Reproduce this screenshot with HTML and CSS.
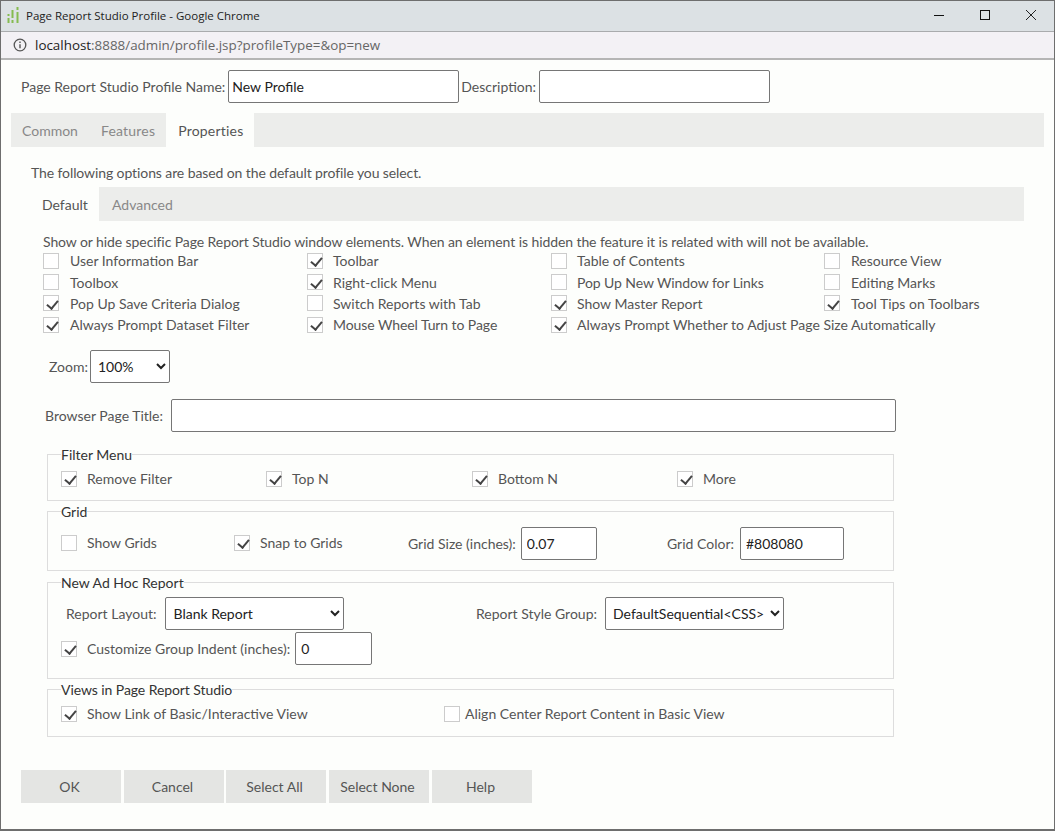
FILE: index.html
```html
<!DOCTYPE html>
<html lang="en">

<head>
    <meta charset="utf-8">
    <meta name="viewport" content="width=device-width, initial-scale=1.0">
    <title>Page Report Studio Profile</title>
    <link rel="stylesheet" href="styles.css">
</head>

<body>
    <div class="window">
        <!-- chrome title bar -->
        <div class="titlebar">
            <svg class="app_icon" width="14" height="18" viewBox="0 0 14 18">
                <path d="M1.5 8v2M1.5 12v5M5.5 4v8M5.5 14v3M10.5 1v3M10.5 6v11" stroke="#85bb50" stroke-width="2" fill="none"/>
            </svg>
            <span class="title_text">Page Report Studio Profile - Google Chrome</span>
            <div class="window_btns">
                <svg width="12" height="12" viewBox="0 0 12 12"><path d="M1 6.5h10" stroke="#111" stroke-width="1" fill="none"/></svg>
                <svg width="12" height="12" viewBox="0 0 12 12"><rect x="1.5" y="1.5" width="9" height="9" stroke="#111" stroke-width="1" fill="none"/></svg>
                <svg width="12" height="12" viewBox="0 0 12 12"><path d="M1 1l10 10M11 1L1 11" stroke="#222" stroke-width="1" fill="none"/></svg>
            </div>
        </div>
        <div class="urlbar">
            <svg width="14" height="14" viewBox="0 0 14 14">
                <circle cx="7" cy="7" r="5.8" stroke="#555" stroke-width="1.3" fill="none"/>
                <path d="M7 6.2v4M7 3.6v1.5" stroke="#555" stroke-width="1.4" fill="none"/>
            </svg>
            <span class="url"><b>localhost</b>:8888/admin/profile.jsp?profileType=&amp;op=new</span>
        </div>

        <div class="content">
            <div class="name_row">
                <label>Page Report Studio Profile Name:</label>
                <input class="text name_input" type="text" value="New Profile">
                <label class="desc_label">Description:</label>
                <input class="text name_input" type="text">
            </div>

            <div class="tabs main_tabs">
                <span class="tab">Common</span>
                <span class="tab">Features</span>
                <span class="tab active">Properties</span>
            </div>

            <div class="props">
                <p class="intro">The following options are based on the default profile you select.</p>
                <div class="tabs sub_tabs">
                    <span class="tab active">Default</span>
                    <span class="tab">Advanced</span>
                </div>

                <p class="hint">Show or hide specific Page Report Studio window elements. When an element is hidden the feature it is related with will not be available.</p>
                <div class="check_grid">
                    <label class="check"><input type="checkbox">User Information Bar</label>
                    <label class="check"><input type="checkbox" checked>Toolbar</label>
                    <label class="check"><input type="checkbox">Table of Contents</label>
                    <label class="check"><input type="checkbox">Resource View</label>
                    <label class="check"><input type="checkbox">Toolbox</label>
                    <label class="check"><input type="checkbox" checked>Right-click Menu</label>
                    <label class="check tight"><input type="checkbox">Pop Up New Window for Links</label>
                    <label class="check"><input type="checkbox">Editing Marks</label>
                    <label class="check"><input type="checkbox" checked>Pop Up Save Criteria Dialog</label>
                    <label class="check"><input type="checkbox">Switch Reports with Tab</label>
                    <label class="check"><input type="checkbox" checked>Show Master Report</label>
                    <label class="check"><input type="checkbox" checked>Tool Tips on Toolbars</label>
                    <label class="check"><input type="checkbox" checked>Always Prompt Dataset Filter</label>
                    <label class="check tight"><input type="checkbox" checked>Mouse Wheel Turn to Page</label>
                    <label class="check wide"><input type="checkbox" checked>Always Prompt Whether to Adjust Page Size Automatically</label>
                </div>

                <div class="zoom_row">
                    <label>Zoom:</label>
                    <select class="pick zoom_pick"><option>100%</option></select>
                </div>

                <div class="title_row">
                    <label>Browser Page Title:</label>
                    <input class="text title_input" type="text">
                </div>

                <fieldset class="filter_set">
                    <legend>Filter Menu</legend>
                    <div class="filter_grid">
                        <label class="check"><input type="checkbox" checked>Remove Filter</label>
                        <label class="check"><input type="checkbox" checked>Top N</label>
                        <label class="check"><input type="checkbox" checked>Bottom N</label>
                        <label class="check"><input type="checkbox" checked>More</label>
                    </div>
                </fieldset>

                <fieldset class="grid_set">
                    <legend>Grid</legend>
                    <div class="grid_row">
                        <label class="check show_grids"><input type="checkbox">Show Grids</label>
                        <label class="check snap_grids"><input type="checkbox" checked>Snap to Grids</label>
                        <div class="grid_size">
                            <label>Grid Size (inches):</label>
                            <input class="text small_input" type="text" value="0.07">
                        </div>
                        <div class="grid_color">
                            <label>Grid Color:</label>
                            <input class="text color_input" type="text" value="#808080">
                        </div>
                    </div>
                </fieldset>

                <fieldset class="adhoc_set">
                    <legend>New Ad Hoc Report</legend>
                    <div class="adhoc_row">
                        <div class="layout_cell">
                            <label>Report Layout:</label>
                            <select class="pick layout_pick"><option>Blank Report</option></select>
                        </div>
                        <div class="style_cell">
                            <label>Report Style Group:</label>
                            <select class="pick style_pick"><option>DefaultSequential&lt;CSS&gt;</option></select>
                        </div>
                    </div>
                    <div class="indent_row">
                        <label class="check"><input type="checkbox" checked>Customize Group Indent (inches):</label>
                        <input class="text indent_input" type="text" value="0">
                    </div>
                </fieldset>

                <fieldset class="views_set">
                    <legend class="tight">Views in Page Report Studio</legend>
                    <div class="views_grid">
                        <label class="check"><input type="checkbox" checked>Show Link of Basic/Interactive View</label>
                        <label class="check close"><input type="checkbox">Align Center Report Content in Basic View</label>
                    </div>
                </fieldset>
            </div>

            <div class="buttons">
                <button>OK</button>
                <button>Cancel</button>
                <button>Select All</button>
                <button>Select None</button>
                <button>Help</button>
            </div>
        </div>
    </div>
</body>

</html>
```

FILE: styles.css
```css
* {
    box-sizing: border-box;
}

html,
body {
    margin: 0;
    padding: 0;
    background-color: #fdfefc;
}

body {
    font-family: Lato, sans-serif;
    font-size: 14px;
    color: #555;
}

.window {
    width: 1055px;
    height: 831px;
    border: 1px solid #6e6e6e;
    border-bottom-width: 2px;
    background-color: #fdfefc;
    overflow: hidden;
}

/* browser chrome */

.titlebar {
    height: 31px;
    background-color: #dce1e4;
    border-bottom: 1px solid #a9abad;
    display: flex;
    align-items: center;
    padding: 0 0 2px 6px;
}

.app_icon {
    margin-right: 5px;
}

.title_text {
    font-family: "Open Sans", sans-serif;
    font-size: 11.5px;
    color: #222;
}

.window_btns {
    margin-left: auto;
    display: flex;
    gap: 34px;
    padding-right: 17px;
}

.urlbar {
    height: 28px;
    background-color: #f3f1f5;
    border-bottom: 2px solid #b5b5b5;
    display: flex;
    align-items: center;
    padding-left: 12px;
    gap: 8px;
}

.url {
    font-family: "Open Sans", sans-serif;
    font-size: 13.4px;
    color: #666;
}

.url b {
    font-weight: normal;
    color: #222;
}

/* form */

.content {
    padding: 10px 10px 0 10px;
}

label {
    white-space: nowrap;
}

.text,
.pick {
    height: 33px;
    border: 1px solid #767676;
    border-radius: 2px;
    background-color: #fff;
    font-family: Lato, sans-serif;
    font-size: 14px;
    color: #222;
    padding: 0 5px;
}

.pick {
    padding: 0 3px;
}

.name_row {
    display: flex;
    align-items: center;
    padding-left: 10px;
    gap: 3px;
}

.name_input {
    width: 231px;
    padding: 0 3px;
}

.desc_label {
    margin-left: -1px;
}

.tabs {
    display: flex;
    align-items: stretch;
    background-color: #ecedeb;
    color: #888;
}

.main_tabs {
    height: 34px;
    margin-top: 10px;
    width: 1033px;
}

.main_tabs .tab {
    padding: 0 11px;
    line-height: 36px;
}

.main_tabs .tab + .tab {
    padding-left: 12px;
    letter-spacing: 0.2px;
}

.main_tabs .tab.active {
    padding: 0 11px 0 12px;
}

.tab.active {
    background-color: #fdfefc;
    color: #555;
}

.props {
    padding-left: 20px;
}

.intro {
    margin: 0;
    padding-top: 17px;
    line-height: 17px;
    height: 40px;
    letter-spacing: -0.1px;
}

.sub_tabs {
    height: 34px;
    width: 993px;
}

.sub_tabs .tab {
    padding: 0 11px;
    line-height: 36px;
}

.sub_tabs .tab.active {
    width: 68px;
}

.sub_tabs .tab + .tab {
    padding-left: 13px;
}

.hint {
    margin: 0;
    padding: 12px 0 0 12px;
    line-height: 17px;
    letter-spacing: -0.085px;
}

.check {
    display: flex;
    align-items: center;
}

.tight {
    letter-spacing: -0.08px;
}

.check input {
    appearance: none;
    width: 16px;
    height: 16px;
    margin: 0 10px 0 0;
    border: 1px solid #ccc;
    background-color: #fff;
    flex: none;
    position: relative;
}

.check.close input {
    margin-right: 5px;
}

.check input:checked::after {
    content: "";
    position: absolute;
    left: 4.5px;
    top: 1.5px;
    width: 5px;
    height: 9px;
    border: solid #444;
    border-width: 0 2px 2px 0;
    transform: rotate(40deg);
}

.check_grid {
    display: grid;
    grid-template-columns: 264px 244px 273px 200px;
    grid-auto-rows: 21.35px;
    align-items: center;
    padding-left: 12px;
}

.check_grid .check:nth-child(4n+1) input,
.check_grid .check:nth-child(4n) input {
    margin-right: 11px;
}

.check_grid .wide {
    grid-column: 3 / 5;
}

.zoom_row {
    display: flex;
    align-items: center;
    padding-left: 18px;
    margin-top: 15px;
    gap: 2px;
}

.zoom_pick {
    width: 80px;
}

.title_row {
    display: flex;
    align-items: center;
    padding-left: 14px;
    margin-top: 16px;
    gap: 8px;
}

.title_input {
    width: 725px;
}

fieldset {
    margin: 0 0 0 16px;
    padding: 0 13px;
    width: 847px;
    border: 1px solid #ddd;
}

legend {
    padding: 0;
    color: #333;
    line-height: 17px;
}

.filter_set {
    margin-top: 14px;
    height: 55px;
}

.filter_grid {
    display: grid;
    grid-template-columns: 205px 206px 205px 200px;
    padding-top: 7px;
}

.grid_set {
    margin-top: 2px;
    height: 68px;
}

.grid_row {
    display: flex;
    align-items: center;
    height: 33px;
    margin-top: 7px;
}

.show_grids {
    width: 173px;
    margin-bottom: 2px;
}

.snap_grids {
    width: 174px;
    margin-bottom: 2px;
}

.grid_size,
.grid_color {
    display: flex;
    align-items: center;
}

.grid_size {
    width: 259px;
    gap: 5px;
}

.small_input {
    width: 76px;
}

.color_input {
    width: 104px;
}

.grid_color {
    gap: 6px;
}

.adhoc_set {
    margin-top: 3px;
    height: 105px;
}

.adhoc_row {
    display: flex;
    align-items: center;
    margin-top: 6px;
    padding-left: 5px;
}

.layout_cell,
.style_cell {
    display: flex;
    align-items: center;
}

.layout_cell {
    width: 410px;
    gap: 9px;
}

.style_cell {
    gap: 8px;
}

.layout_pick {
    width: 179px;
}

.style_pick {
    width: 179px;
}

.indent_row {
    display: flex;
    align-items: center;
    margin-top: 2px;
}

.indent_input {
    width: 77px;
    margin-left: 5px;
}

.views_set {
    margin-top: 2px;
    height: 56px;
}

.views_grid {
    display: grid;
    grid-template-columns: 383px 400px;
    margin-top: 7px;
}

.buttons {
    display: flex;
    gap: 3px;
    padding-left: 10px;
    margin-top: 33px;
}

.buttons button {
    width: 100px;
    height: 33px;
    border: none;
    padding: 0 3px 0 0;
    background-color: #e4e5e3;
    font-family: Lato, sans-serif;
    font-size: 14px;
    color: #555;
}

.buttons button:nth-child(3) {
    margin-left: -1px;
}
```
